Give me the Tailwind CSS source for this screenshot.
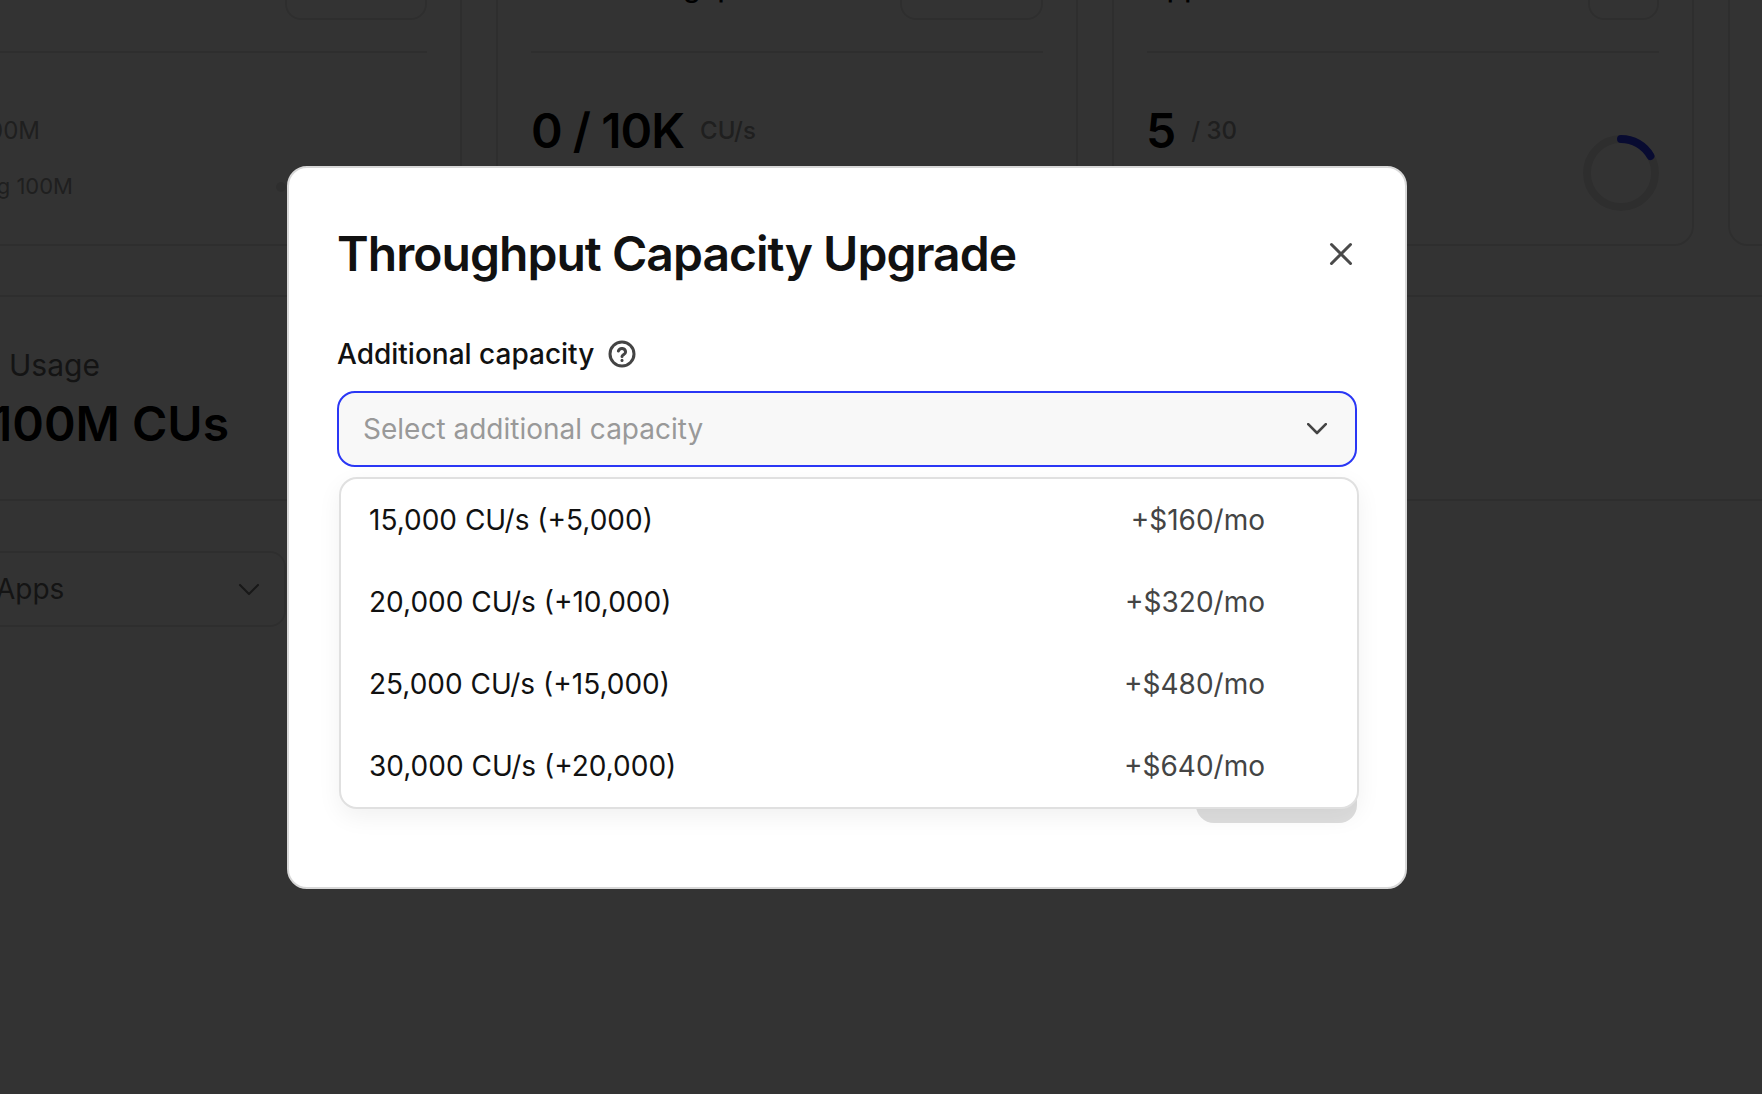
<!DOCTYPE html>
<html lang="en">
<head>
<meta charset="utf-8">
<title>Throughput Capacity Upgrade</title>
<script src="https://cdn.jsdelivr.net/npm/@tailwindcss/browser@4"></script>
</head>
<body class="bg-white">
<div class="relative w-[1762px] h-[1094px] overflow-hidden font-['Inter',sans-serif] text-black">
  <!-- page under overlay -->
  <div class="-ml-[120px] w-[2000px]">
    <div class="flex gap-[34px] border-b-2 border-[#e5e5e5] pb-[50px] h-[337px] -mt-[40px]">
      <section class="w-[582px] h-[286px] shrink-0 rounded-[20px] border-2 border-[#e5e5e5] px-[33px] relative">
        <div class="flex justify-between h-[58px] items-end pb-0">
          <span class="text-[28px] leading-[34px] font-medium self-start mt-[8px]">CUs</span>
          <span class="w-[142px] h-[58px] rounded-[16px] border-2 border-[#e5e5e5] flex items-end justify-center text-[24px] leading-[32px] font-medium text-[#555] pb-[18px]">Upgrade</span>
        </div>
        <div class="h-[33px] border-b-2 border-[#e5e5e5]"></div>
        <div class="w-[125px] mt-[62px] whitespace-nowrap text-[24px] leading-[32px] text-[#999] flex justify-end">0 / 100M</div>
        <div class="w-[158px] mt-[23px] whitespace-nowrap text-[22px] leading-[32px] text-[#999] flex justify-end">Remaining 100M</div>
        <span class="absolute left-[394px] top-[220px] w-[10px] h-[10px] rounded-full bg-[#e5e5e5]"></span>
      </section>
      <section class="w-[582px] h-[286px] shrink-0 rounded-[20px] border-2 border-[#e5e5e5] px-[33px]">
        <div class="flex justify-between h-[58px]">
          <span class="text-[28px] leading-[34px] font-medium mt-[8px] whitespace-nowrap">Total Throughput</span>
          <span class="w-[143px] h-[58px] rounded-[16px] border-2 border-[#e5e5e5] flex items-end justify-center text-[24px] leading-[32px] font-medium text-[#555] pb-[18px]">Upgrade</span>
        </div>
        <div class="h-[33px] border-b-2 border-[#e5e5e5]"></div>
        <div class="mt-[50px] flex items-center gap-[16px]">
          <span class="text-[48px] leading-[56px] font-semibold tracking-[-0.02em] whitespace-nowrap">0 / 10K</span>
          <span class="text-[24px] leading-[32px] text-[#999] font-medium -mt-[1px]">CU/s</span>
        </div>
      </section>
      <section class="relative w-[582px] h-[286px] shrink-0 rounded-[20px] border-2 border-[#e5e5e5] px-[33px]">
        <div class="flex justify-between h-[58px]">
          <span class="text-[28px] leading-[34px] font-medium mt-[8px]">Apps</span>
          <span class="w-[71px] h-[58px] rounded-[16px] border-2 border-[#e5e5e5]"></span>
        </div>
        <div class="h-[33px] border-b-2 border-[#e5e5e5]"></div>
        <div class="mt-[50px] -ml-[1px] flex items-center gap-[15px]">
          <span class="text-[48px] leading-[56px] font-semibold">5</span>
          <span class="text-[24px] leading-[32px] text-[#999] font-medium -mt-[1px]">/ 30</span>
        </div>
        <svg class="absolute left-[469px] top-[173px] w-[76px] h-[76px] -rotate-90" viewBox="0 0 76 76" fill="none">
          <circle cx="38" cy="38" r="34" stroke="#e5e5e5" stroke-width="8"></circle>
          <circle cx="38" cy="38" r="34" stroke="#2a37f5" stroke-width="8" stroke-dasharray="35.6 178" stroke-linecap="round"></circle>
        </svg>
      </section>
      <section class="w-[582px] h-[286px] shrink-0 rounded-[20px] border-2 border-[#e5e5e5]"></section>
    </div>
    <div class="h-[204px] border-b-2 border-[#e5e5e5] pt-[46px] pl-[120px]">
      <div class="text-[30px] leading-[44px] text-[#666] pl-[9px]">Usage</div>
      <div class="w-[349px] -ml-[120px] mt-[9px] text-[48px] leading-[56px] font-semibold whitespace-nowrap flex justify-end"><span>100M CUs</span></div>
    </div>
    <div class="mt-[50px] w-[406px] h-[76px] rounded-[16px] border-2 border-[#e5e5e5] flex items-center justify-end pr-[23px] relative">
      <span class="absolute left-[114px] text-[28px] text-[#666]">Apps</span>
      <svg class="w-[24px] h-[24px]" viewBox="0 0 24 24" fill="none" stroke="#777" stroke-width="2.2" stroke-linecap="round" stroke-linejoin="round"><path d="M3 8l9 9 9-9"></path></svg>
    </div>
  </div>

  <!-- overlay -->
  <div class="absolute inset-0 bg-black/80"></div>

  <!-- modal -->
  <div class="absolute left-[287px] top-[166px] w-[1120px] h-[723px] bg-white rounded-[20px] border-[2px] border-[#d8d8d8] pt-[49px] pl-[48px] pr-[48px] flex flex-col">
    <div class="flex items-center justify-between h-[74px]">
      <h2 class="text-[48px] leading-[74px] font-semibold tracking-[-0.02em] text-[#111]">Throughput Capacity Upgrade</h2>
      <svg class="w-[24px] h-[24px] mr-[4px]" viewBox="0 0 24 24" fill="none" stroke="#4a4a4a" stroke-width="3" stroke-linecap="round"><path d="M2.5 2.5l19 19M21.5 2.5l-19 19"></path></svg>
    </div>
    <div class="flex items-center gap-[14px] mt-[44px] h-[38px]">
      <span class="text-[28px] leading-[38px] font-medium text-[#111]">Additional capacity</span>
      <svg class="w-[28px] h-[28px]" viewBox="0 0 28 28" fill="none" stroke="#444" stroke-width="3" stroke-linecap="round" stroke-linejoin="round">
        <circle cx="14" cy="14" r="12"></circle>
        <path d="M10.4 11a3.7 3.7 0 0 1 7.2 1c0 2.4-3.6 3-3.6 4.4"></path>
        <path d="M14 20.2v.2"></path>
      </svg>
    </div>
    <div class="relative mt-[18px]">
      <div class="h-[76px] w-[1020px] rounded-[18px] border-2 border-[#2a37f5] bg-[#f8f8f8] flex items-center justify-between pl-[24px] pr-[28px]">
        <span class="text-[28px] leading-[36px] text-[#999]">Select additional capacity</span>
        <svg class="w-[20px] h-[12px]" viewBox="0 0 20 12" fill="none" stroke="#444" stroke-width="2.6" stroke-linecap="round" stroke-linejoin="round"><path d="M1.2 1.2L10 10l8.8-8.8"></path></svg>
      </div>
      <div class="absolute left-[2px] top-[86px] w-[1020px] h-[332px] z-10 rounded-[18px] border-2 border-[#e0e0e0] bg-white shadow-[0_8px_24px_rgba(0,0,0,0.06)] pl-[28px] pr-[92px] text-[28px]">
        <div class="flex items-center justify-between h-[82px]"><span class="text-[#111]">15,000 CU/s (+5,000)</span><span class="text-[#444]">+$160/mo</span></div>
        <div class="flex items-center justify-between h-[82px]"><span class="text-[#111]">20,000 CU/s (+10,000)</span><span class="text-[#444]">+$320/mo</span></div>
        <div class="flex items-center justify-between h-[82px]"><span class="text-[#111]">25,000 CU/s (+15,000)</span><span class="text-[#444]">+$480/mo</span></div>
        <div class="flex items-center justify-between h-[82px]"><span class="text-[#111]">30,000 CU/s (+20,000)</span><span class="text-[#444]">+$640/mo</span></div>
      </div>
      <div class="absolute left-[859px] top-[340px] w-[161px] h-[92px] rounded-[18px] bg-[#dedede]"></div>
    </div>
  </div>
</div>
</body>
</html>
